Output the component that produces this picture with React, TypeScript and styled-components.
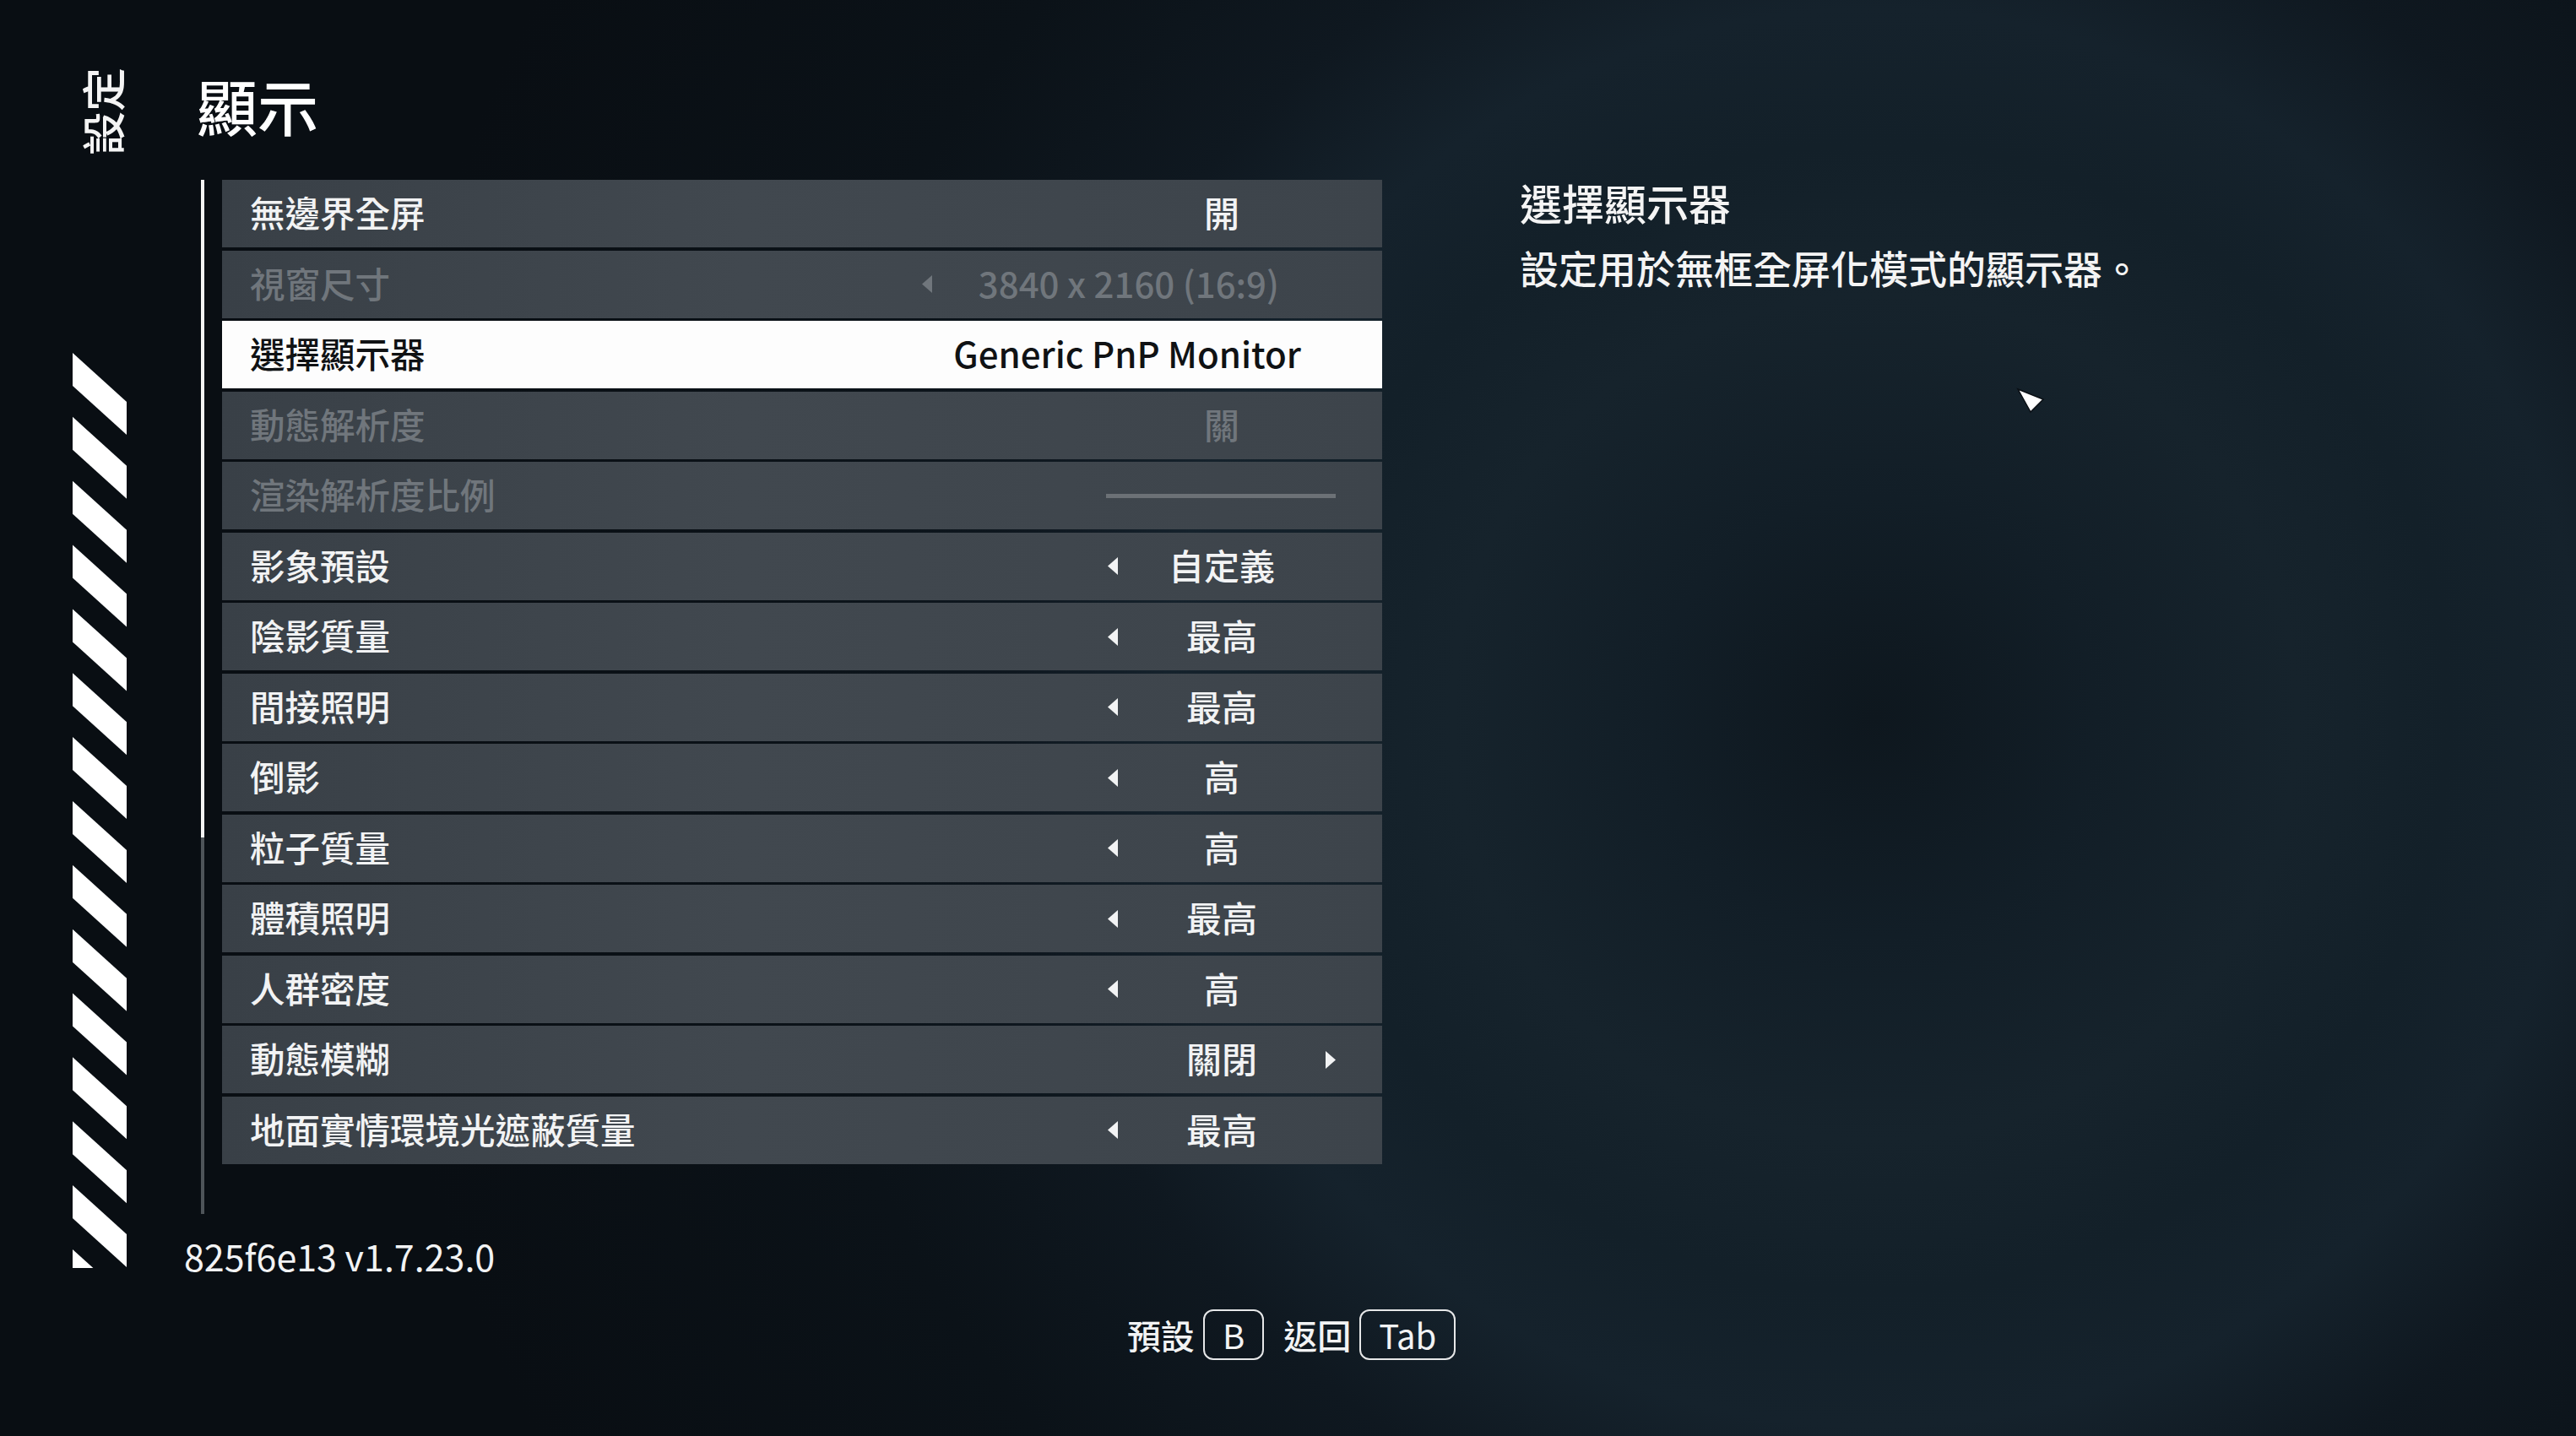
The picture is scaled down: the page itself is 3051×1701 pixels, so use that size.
import React from "react";
import styled, { createGlobalStyle } from "styled-components";

const FONT = `"Noto Sans CJK TC", "Noto Sans", sans-serif`;

const GlobalStyle = createGlobalStyle`
  html, body { margin: 0; padding: 0; background: #0a0f14; }
  body { font-family: ${FONT}; }
  * { box-sizing: border-box; }
`;

type RowState = "normal" | "disabled" | "selected";
type RowKind = "choice" | "plain" | "slider";

interface RowData {
  label: string;
  kind: RowKind;
  value?: string;
  left?: boolean;
  right?: boolean;
  state: RowState;
}

const rows: RowData[] = [
  { label: "無邊界全屏", kind: "choice", value: "開", state: "normal" },
  { label: "視窗尺寸", kind: "choice", value: "3840 x 2160 (16:9)", left: true, state: "disabled" },
  { label: "選擇顯示器", kind: "plain", value: "Generic PnP Monitor", state: "selected" },
  { label: "動態解析度", kind: "choice", value: "關", state: "disabled" },
  { label: "渲染解析度比例", kind: "slider", state: "disabled" },
  { label: "影象預設", kind: "choice", value: "自定義", left: true, state: "normal" },
  { label: "陰影質量", kind: "choice", value: "最高", left: true, state: "normal" },
  { label: "間接照明", kind: "choice", value: "最高", left: true, state: "normal" },
  { label: "倒影", kind: "choice", value: "高", left: true, state: "normal" },
  { label: "粒子質量", kind: "choice", value: "高", left: true, state: "normal" },
  { label: "體積照明", kind: "choice", value: "最高", left: true, state: "normal" },
  { label: "人群密度", kind: "choice", value: "高", left: true, state: "normal" },
  { label: "動態模糊", kind: "choice", value: "關閉", right: true, state: "normal" },
  { label: "地面實情環境光遮蔽質量", kind: "choice", value: "最高", left: true, state: "normal" },
];

const textColor = (s: RowState) =>
  s === "selected" ? "#101214" : s === "disabled" ? "#70767c" : "#f2f3f4";

const Page = styled.div`
  position: relative;
  width: 3051px;
  height: 1701px;
  overflow: hidden;
  display: flex;
  flex-direction: column;
  font-family: ${FONT};
  color: #f2f3f4;
  background:
    radial-gradient(circle at 2220px 850px,
      #0e171e 0px, #121e27 260px, #16232c 500px, #132029 680px,
      #15222c 840px, #0f1820 1020px, #0b1218 1300px, #090e13 1800px);
`;

const Top = styled.div`
  display: flex;
  padding-left: 86px;
`;

const Rail = styled.div`
  width: 64px;
  display: flex;
  flex-direction: column;
  align-items: center;
`;

const RailLabel = styled.div`
  margin-top: 80px;
  font-size: 52px;
  line-height: 60px;
  width: 60px;
  height: 104px;
  margin-left: 6px;
  writing-mode: vertical-rl;
  text-orientation: sideways;
  transform: rotate(180deg);
  color: #f4f4f4;
  font-weight: 500;
`;

const StripeBox = styled.svg`
  display: block;
  margin-top: 231px;
  width: 64px;
  height: 1087px;
`;

const Main = styled.div`
  margin-left: 68px;
  width: 1419px;
  display: flex;
  flex-direction: column;
  padding-top: 84px;
`;

const Title = styled.h1`
  margin: 0 0 0 15px;
  font-size: 72px;
  line-height: 80px;
  font-weight: 500;
  color: #ffffff;
`;

const ListArea = styled.div`
  margin-top: 49px;
  display: flex;
  align-items: flex-start;
  padding-left: 20px;
  gap: 21px;
`;

const ScrollTrack = styled.div`
  width: 4px;
  height: 1225px;
  background: #4e5459;
  flex-shrink: 0;
`;

const ScrollThumb = styled.div`
  width: 4px;
  height: 779px;
  background: #f4f4f4;
`;

const Panel = styled.div`
  width: 1374px;
  display: flex;
  flex-direction: column;
  gap: 3.5px;
`;

const Row = styled.div<{ $state: RowState }>`
  height: 80px;
  display: flex;
  align-items: center;
  justify-content: space-between;
  padding-left: 33px;
  padding-bottom: 2px;
  background: ${(p) =>
    p.$state === "selected"
      ? "#fdfdfd"
      : "linear-gradient(90deg, #394047 0%, #41484f 45%, #3d444b 100%)"};
  color: ${(p) => textColor(p.$state)};
`;

const Label = styled.span`
  font-size: 41.5px;
  line-height: 1;
  font-weight: 500;
  white-space: nowrap;
`;

const ValueGroup = styled.div<{ $plain?: boolean }>`
  display: flex;
  align-items: center;
  gap: 55px;
  padding-top: 2px;
  padding-right: ${(p) => (p.$plain ? "96px" : "55px")};
`;

const Value = styled.span`
  min-width: 136px;
  text-align: center;
  font-size: 42px;
  line-height: 1;
  font-weight: 500;
  white-space: nowrap;
  margin-top: -4px;
`;

const ArrowSvg = styled.svg<{ $hidden?: boolean }>`
  display: block;
  width: 12px;
  height: 21px;
  visibility: ${(p) => (p.$hidden ? "hidden" : "visible")};
`;

const SliderBar = styled.div`
  width: 272px;
  height: 5px;
  margin-right: 55px;
  margin-top: 2px;
  background: #6c7176;
`;

const Version = styled.div`
  margin-top: 24px;
  font-size: 43px;
  line-height: 50px;
  color: #f2f3f4;
`;

const Description = styled.div`
  margin-left: 163px;
  padding-top: 209px;
  display: flex;
  flex-direction: column;
  gap: 17px;
`;

const DescTitle = styled.div`
  font-size: 50px;
  line-height: 60px;
  font-weight: 500;
  color: #f4f4f4;
`;

const DescBody = styled.div`
  font-size: 46px;
  line-height: 60px;
  font-weight: 500;
  color: #f4f4f4;
`;

const Footer = styled.div`
  margin-top: 39px;
  display: flex;
  justify-content: center;
  align-items: center;
  height: 60px;
  padding-left: 8px;
`;

const Hint = styled.span`
  font-size: 40px;
  line-height: 1;
  font-weight: 500;
  color: #f2f3f4;
  margin-right: 10px;
`;

const Key = styled.span<{ $last?: boolean }>`
  display: inline-flex;
  align-items: center;
  justify-content: center;
  height: 60px;
  padding: 0 21px;
  border: 2px solid #e6e7e8;
  border-radius: 12px;
  font-size: 40px;
  line-height: 1;
  color: #f2f3f4;
  margin-right: ${(p) => (p.$last ? "0" : "23px")};
`;

const Cursor = styled.svg`
  position: absolute;
  left: 2386px;
  top: 458px;
  width: 40px;
  height: 36px;
`;

const Arrow: React.FC<{ dir: "left" | "right"; hidden?: boolean; color: string }> = ({
  dir,
  hidden,
  color,
}) => (
  <ArrowSvg viewBox="0 0 12 21" $hidden={hidden}>
    {dir === "left" ? (
      <polygon points="12,0 12,21 0,10.5" fill={color} />
    ) : (
      <polygon points="0,0 0,21 12,10.5" fill={color} />
    )}
  </ArrowSvg>
);

const Stripes: React.FC = () => {
  const period = 75.85;
  const polys = [] as React.ReactNode[];
  for (let k = 0; k < 15; k++) {
    const y = 3 + k * period;
    polys.push(
      <polygon
        key={k}
        points={`0,${y} 64,${y + 58} 64,${y + 97} 0,${y + 39}`}
        fill="#ffffff"
      />
    );
  }
  return (
    <StripeBox viewBox="0 0 64 1087" preserveAspectRatio="none">
      {polys}
    </StripeBox>
  );
};

const SettingRow: React.FC<{ row: RowData }> = ({ row }) => {
  const color = textColor(row.state);
  let right: React.ReactNode = null;
  if (row.kind === "plain") {
    right = (
      <ValueGroup $plain>
        <Value>{row.value}</Value>
      </ValueGroup>
    );
  } else if (row.kind === "slider") {
    right = <SliderBar />;
  } else {
    right = (
      <ValueGroup>
        <Arrow dir="left" hidden={!row.left} color={color} />
        <Value>{row.value}</Value>
        <Arrow dir="right" hidden={!row.right} color={color} />
      </ValueGroup>
    );
  }
  return (
    <Row $state={row.state}>
      <Label>{row.label}</Label>
      {right}
    </Row>
  );
};

export default function App() {
  return (
    <>
      <GlobalStyle />
      <Page>
        <Top>
          <Rail>
            <RailLabel>設定</RailLabel>
            <Stripes />
          </Rail>
          <Main>
            <Title>顯示</Title>
            <ListArea>
              <ScrollTrack>
                <ScrollThumb />
              </ScrollTrack>
              <Panel>
                {rows.map((r) => (
                  <SettingRow key={r.label} row={r} />
                ))}
              </Panel>
            </ListArea>
            <Version>825f6e13 v1.7.23.0</Version>
          </Main>
          <Description>
            <DescTitle>選擇顯示器</DescTitle>
            <DescBody>設定用於無框全屏化模式的顯示器。</DescBody>
          </Description>
        </Top>
        <Footer>
          <Hint>預設</Hint>
          <Key>B</Key>
          <Hint>返回</Hint>
          <Key $last>Tab</Key>
        </Footer>
        <Cursor viewBox="0 0 40 36">
          <polygon points="4,3 34,15 19,30" fill="#ffffff" stroke="#0a0f14" strokeWidth="1.5" />
        </Cursor>
      </Page>
    </>
  );
}
